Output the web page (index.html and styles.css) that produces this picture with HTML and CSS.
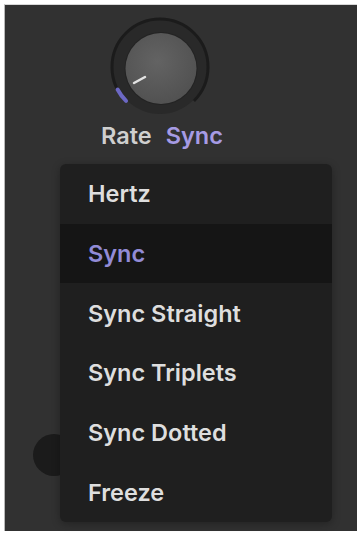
FILE: index.html
```html
<!DOCTYPE html>
<html>
<head>
<link rel="stylesheet" href="styles.css">
</head>
<body>
<div class="panel">
    <div class="rate">
        <svg class="knob" width="110" height="110" viewBox="0 0 110 110">
            <defs>
                <radialGradient id="cap" cx="45%" cy="40%" r="65%">
                    <stop offset="0" stop-color="#636363"/>
                    <stop offset="1" stop-color="#505050"/>
                </radialGradient>
            </defs>
            <circle cx="55" cy="55" r="47" fill="#292929"/>
            <path d="M21.06 88.94 A48 48 0 1 1 88.94 88.94" fill="none" stroke="#1b1b1b" stroke-width="3"/>
            <path d="M21.06 88.94 A48 48 0 0 1 12.6 77.5" fill="none" stroke="#6c68c4" stroke-width="4" stroke-linecap="round"/>
            <circle cx="56" cy="56.5" r="36.5" fill="#232323"/>
            <circle cx="56" cy="56.5" r="35.5" fill="url(#cap)"/>
            <line x1="40" y1="65" x2="29" y2="71" stroke="#e2e2e2" stroke-width="2.5" stroke-linecap="round"/>
        </svg>
        <div class="label">
            <span class="name">Rate</span>
            <span class="mode">Sync</span>
        </div>
    </div>
    <div class="knob-dark"></div>

    <div class="menu">
        <div class="item">Hertz</div>
        <div class="item selected">Sync</div>
        <div class="item">Sync Straight</div>
        <div class="item">Sync Triplets</div>
        <div class="item">Sync Dotted</div>
        <div class="item">Freeze</div>
    </div>
</div>
</body>
</html>
```

FILE: styles.css
```css
* {
    margin: 0;
    padding: 0;
    box-sizing: border-box;
    font-family: Inter, "Liberation Sans", Arial, sans-serif;
}

body {
    background: #fff;
    width: 359px;
    height: 534px;
    padding: 4px 2px 3px 4px;
}

.panel {
    position: relative;
    height: 100%;
    background: #313131;
    border-left: 1px solid #b8b8b8;
    border-top: 1px solid #d8d8d8;
    padding: 7px 0 0 100px;
}

.rate {
    width: 110px;
    display: flex;
    flex-direction: column;
    align-items: center;
}

.knob {
    display: block;
}

.label {
    display: flex;
    gap: 14px;
    margin-left: 4px;
    font-size: 23.5px;
    font-weight: 600;
    line-height: 1.2;
    white-space: nowrap;
}

.name {
    color: #cfcfcf;
}

.mode {
    color: #a69be4;
}

.knob-dark {
    width: 42px;
    height: 42px;
    border-radius: 50%;
    background: #1b1b1b;
    margin: 284px 0 0 -72px;
}

/* dropdown opened over the knobs */
.menu {
    position: absolute;
    left: 55px;
    top: 159px;
    width: 272px;
    height: 358px;
    background: #1f1f1f;
    border-radius: 6px;
    box-shadow: 0 2px 8px rgba(0,0,0,0.3);
    display: flex;
    flex-direction: column;
    overflow: hidden;
}

.item {
    flex: 1;
    display: flex;
    align-items: center;
    padding-left: 28px;
    font-size: 23.5px;
    font-weight: 600;
    color: #dedede;
}

.item.selected {
    background: #151515;
    color: #928bd6;
}
```
